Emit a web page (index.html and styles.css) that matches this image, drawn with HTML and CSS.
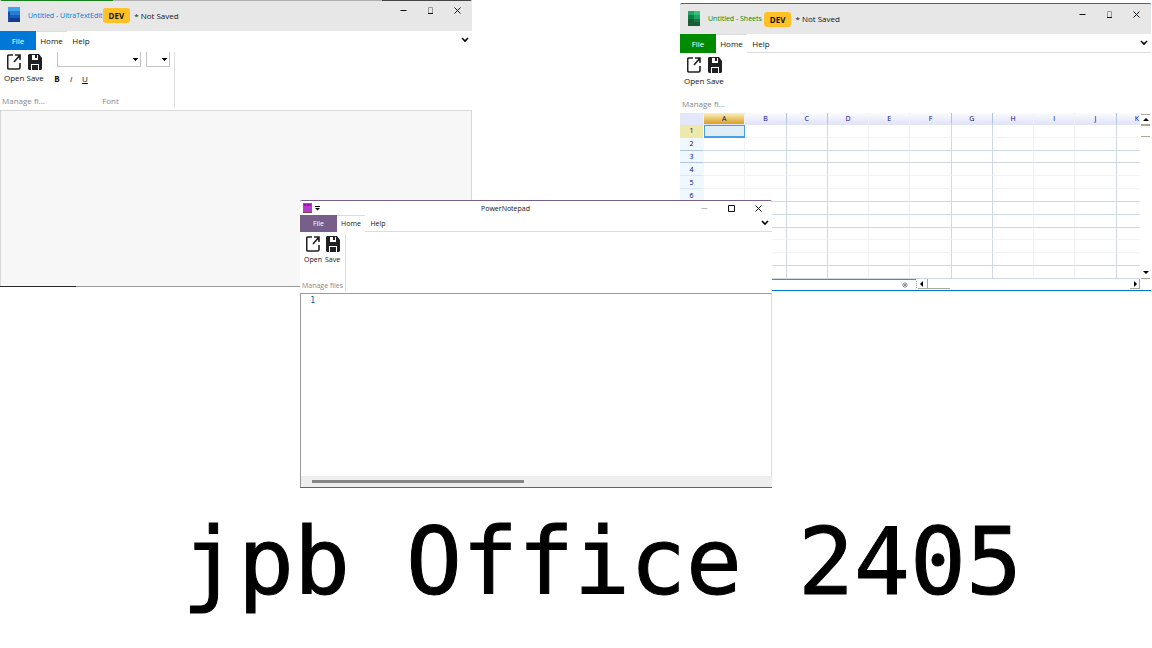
FILE: index.html
```
<!DOCTYPE html>
<html lang="en">
<head>
<meta charset="utf-8">
<title>jpb Office 2405</title>
<link rel="stylesheet" href="styles.css">
</head>
<body>
<svg class="defs" aria-hidden="true">
  <symbol id="open" viewBox="0 0 14 16"><path d="M6 1H2Q.7 1 .7 2.5v11Q.7 15 2 15h9.500Q13 15 13 13.500V9M8 1h5v5M13 1 7 8" fill="none" stroke="#202022" stroke-width="1.600"/></symbol>
  <symbol id="save" viewBox="0 0 14 16"><path fill="#202022" fill-rule="evenodd" d="M1 0h10l3 4v11l-1 1H1l-1-1V1zM4 1v5h6V1zM3 10v6h8v-6z"/><path d="M7 1h2v3H7zM4 11h6v5H4z" fill="#202022"/></symbol>
  <symbol id="min" viewBox="0 0 7 7"><path d="M.5 3.500h6" stroke="currentColor"/></symbol>
  <symbol id="max" viewBox="0 0 7 7"><path d="M1.500 .5h4v6h-4z" fill="none" stroke="#999"/><path d="M1 6.500h5" stroke="currentColor"/></symbol>
  <symbol id="square" viewBox="0 0 7 7"><path d="M.5 .5h6v6h-6z" fill="none" stroke="currentColor"/></symbol>
  <symbol id="close" viewBox="0 0 7 7"><path d="m.5.5 6 6m0-6-6 6" stroke="currentColor"/></symbol>
  <symbol id="chev" viewBox="0 0 8 6"><path d="m1 1 3 3 3-3" fill="none" stroke="#000" stroke-width="1.600"/></symbol>
</svg>
<main class="desktop">
  <section class="window text-edit" aria-label="UltraTextEdit">
    <header class="titlebar">
      <svg class="logo" viewBox="0 0 12 15"><path fill="#41a5ee" d="M0 0h12v4H0z"/><path fill="#2b7cd3" d="M0 4h12v4H0z"/><path fill="#185abd" d="M0 8h12v3H0z"/><path fill="#103f91" d="M0 11h12v4H0z"/><path fill="#1b4da8" d="M0 5h2v9H0z"/></svg>
      <span class="title">Untitled - UltraTextEdit</span><span class="badge">DEV</span><span class="state">* Not Saved</span>
      <div class="controls"><button aria-label="Minimize"><svg><use href="#min"/></svg></button><button aria-label="Maximize"><svg><use href="#max"/></svg></button><button aria-label="Close"><svg><use href="#close"/></svg></button></div>
    </header>
    <nav class="tabs"><button class="file">File</button><button class="tab active">Home</button><button class="tab">Help</button><button class="collapse" aria-label="Collapse ribbon"><svg><use href="#chev"/></svg></button></nav>
    <div class="ribbon">
      <div class="group files"><div class="tools"><button><svg><use href="#open"/></svg>Open</button><button><svg><use href="#save"/></svg>Save</button></div><span class="caption">Manage fi...</span></div>
      <div class="group font">
        <div class="pickers"><select class="family" aria-label="Font family"><option></option></select><select class="size" aria-label="Font size"><option></option></select></div>
        <div class="styles"><button aria-label="Bold"><b>B</b></button><button aria-label="Italic"><i>I</i></button><button aria-label="Underline"><u>U</u></button></div>
        <span class="caption">Font</span>
      </div>
    </div>
    <textarea class="page" aria-label="Document"></textarea>
    <div class="edge"></div>
  </section>

  <section class="window sheets" aria-label="Sheets">
    <header class="titlebar">
      <svg class="logo" viewBox="0 0 12 15"><path fill="#21a366" d="M0 0h12v4H0z"/><path fill="#33c481" d="M6 0h6v4H6z"/><path fill="#107c41" d="M0 4h12v4H0z"/><path fill="#21a366" d="M6 4h6v4H6z"/><path fill="#185c37" d="M0 8h12v7H0z"/><path fill="#107c41" d="M6 8h6v3H6z"/></svg>
      <span class="title">Untitled - Sheets</span><span class="badge">DEV</span><span class="state">* Not Saved</span>
      <div class="controls"><button aria-label="Minimize"><svg><use href="#min"/></svg></button><button aria-label="Maximize"><svg><use href="#max"/></svg></button><button aria-label="Close"><svg><use href="#close"/></svg></button></div>
    </header>
    <nav class="tabs"><button class="file">File</button><button class="tab active">Home</button><button class="tab">Help</button><button class="collapse" aria-label="Collapse ribbon"><svg><use href="#chev"/></svg></button></nav>
    <div class="ribbon">
      <div class="group files"><div class="tools"><button><svg><use href="#open"/></svg>Open</button><button><svg><use href="#save"/></svg>Save</button></div><span class="caption">Manage fi...</span></div>
    </div>
    <div class="workbook">
      <div class="grid">
        <table>
          <thead><tr><th class="corner"></th><th class="picked">A</th><th>B</th><th>C</th><th>D</th><th>E</th><th>F</th><th>G</th><th>H</th><th>I</th><th>J</th><th>K</th></tr></thead>
          <tbody>
            <tr><th class="picked">1</th><td class="cursor"></td><td></td><td></td><td></td><td></td><td></td><td></td><td></td><td></td><td></td><td></td></tr>
            <tr class="strong"><th>2</th><td></td><td></td><td></td><td></td><td></td><td></td><td></td><td></td><td></td><td></td><td></td></tr>
            <tr class="strong"><th>3</th><td></td><td></td><td></td><td></td><td></td><td></td><td></td><td></td><td></td><td></td><td></td></tr>
            <tr><th>4</th><td></td><td></td><td></td><td></td><td></td><td></td><td></td><td></td><td></td><td></td><td></td></tr>
            <tr><th>5</th><td></td><td></td><td></td><td></td><td></td><td></td><td></td><td></td><td></td><td></td><td></td></tr>
            <tr class="strong"><th>6</th><td></td><td></td><td></td><td></td><td></td><td></td><td></td><td></td><td></td><td></td><td></td></tr>
            <tr class="strong"><th></th><td></td><td></td><td></td><td></td><td></td><td></td><td></td><td></td><td></td><td></td><td></td></tr>
            <tr class="strong"><th></th><td></td><td></td><td></td><td></td><td></td><td></td><td></td><td></td><td></td><td></td><td></td></tr>
            <tr><th></th><td></td><td></td><td></td><td></td><td></td><td></td><td></td><td></td><td></td><td></td><td></td></tr>
            <tr><th></th><td></td><td></td><td></td><td></td><td></td><td></td><td></td><td></td><td></td><td></td><td></td></tr>
            <tr class="strong"><th></th><td></td><td></td><td></td><td></td><td></td><td></td><td></td><td></td><td></td><td></td><td></td></tr>
            <tr class="strong"><th></th><td></td><td></td><td></td><td></td><td></td><td></td><td></td><td></td><td></td><td></td><td></td></tr>
          </tbody>
        </table>
      </div>
      <div class="vscroll"><button aria-label="Scroll up"><svg viewBox="0 0 6 4"><path d="M3 0 6 3H0z"/></svg></button><span class="thumb"></span><button class="end" aria-label="Scroll down"><svg viewBox="0 0 6 4"><path d="M0 0h6L3 3z"/></svg></button></div>
    </div>
    <footer class="sheetbar">
      <div class="sheettabs"><button aria-label="New sheet"><svg viewBox="0 0 6 6"><path d="M3 0v6M0 3h6M1 1l4 4M5 1 1 5" stroke="#8a929c" stroke-width="1"/></svg></button></div>
      <span class="grip"></span>
      <div class="hscroll"><button aria-label="Scroll left"><svg viewBox="0 0 4 6"><path d="M3 0v6L0 3z"/></svg></button><span class="thumb"></span><button class="end" aria-label="Scroll right"><svg viewBox="0 0 4 6"><path d="M1 0v6l3-3z"/></svg></button></div>
    </footer>
  </section>

  <section class="window notepad" aria-label="PowerNotepad">
    <header class="titlebar">
      <div class="quick"><svg class="logo" viewBox="0 0 9 10"><path fill="#c832d2" d="M0 0h9v9H0z"/><path fill="#b040cc" d="M0 5h9v4H0z"/><path d="M1 1l1 2 1-2M4 1l1 2 1-2M7 1v2" fill="none" stroke="#7a1696"/><path fill="#8b4040" d="M0 9h9v1H0z"/></svg><svg class="more" viewBox="0 0 5 5"><path d="M0 0h5v1H0zM0 2h5L2.500 4.500z"/></svg></div>
      <span class="title">PowerNotepad</span>
      <div class="controls"><button class="dim" aria-label="Minimize"><svg><use href="#min"/></svg></button><button aria-label="Maximize"><svg><use href="#square"/></svg></button><button aria-label="Close"><svg><use href="#close"/></svg></button></div>
    </header>
    <nav class="tabs"><button class="file">File</button><button class="tab active">Home</button><button class="tab">Help</button><button class="collapse" aria-label="Collapse ribbon"><svg><use href="#chev"/></svg></button></nav>
    <div class="ribbon">
      <div class="group files"><div class="tools"><button><svg><use href="#open"/></svg>Open</button><button><svg><use href="#save"/></svg>Save</button></div><span class="caption">Manage files</span></div>
    </div>
    <div class="editor"><span class="line">1</span><textarea aria-label="Code"></textarea></div>
    <div class="track"><span class="thumb"></span></div>
  </section>
</main>
<h1 class="product">jpb Office 2405</h1>
</body>
</html>
```
FILE: styles.css
```
* { box-sizing: border-box; }
body {
  margin: 0;
  min-height: 100vh;
  display: flex;
  flex-direction: column;
  background: #fff;
  color: #111;
  font-family: "Open Sans", "Noto Sans", sans-serif;
  font-size: 8px;
  line-height: 12px;
}
button, select, textarea { font: inherit; color: inherit; border: 0; padding: 0; margin: 0; background: none; border-radius: 0; }
svg { display: block; flex: none; }
.defs { position: absolute; width: 0; height: 0; }
.desktop { position: relative; flex: 1; min-height: 488px; }
.product {
  margin: 0;
  padding: 0 0 32px 52px;
  text-align: center;
  white-space: nowrap;
  font: 400 93px/108px "DejaVu Sans Mono", monospace;
  color: #000;
  -webkit-text-stroke: 1px #000;
}

/* Windows */
.window { position: absolute; display: flex; flex-direction: column; width: 41%; background: #fff; }
.text-edit { left: 0; top: 0; height: 287px; --accent: #0078d7; }
.sheets { left: 680px; right: 1px; top: 3px; width: auto; height: 288px; border-bottom: 1px solid #0078d7; --accent: #008a00; }
.notepad { left: 300px; top: 200px; height: 288px; border-bottom: 1px solid #6b5c78; --accent: #785f8a; }

.titlebar { display: flex; align-items: center; height: 31px; padding-left: 8px; background: #e7e7e7; border-top: 1px solid #0078d7; border-radius: 2px 2px 0 0; }
.text-edit .titlebar { border-top: 0; background: linear-gradient(90deg, #15811a 24%, #b0b0b0 24%, #b0b0b0 81%, #444 81%) top / 100% 1px no-repeat #e7e7e7; }
.titlebar .logo { width: 12px; height: 15px; margin-right: 8px; margin-bottom: 2px; }
.titlebar .title { color: var(--accent); font-size: 7px; white-space: nowrap; }
.badge { margin: 0 4px 0 2px; padding: 0 6px; line-height: 15px; border-radius: 3px; background: #ffc125; font-weight: 700; }
.text-edit .badge { margin: 0 4px 0 0; }
.state { white-space: nowrap; }
.controls { display: flex; align-self: flex-start; margin-left: auto; padding-right: 1px; }
.controls button { display: grid; place-items: center; width: 27px; height: 21px; }
.controls svg { width: 7px; height: 7px; }
.controls .dim { color: #bbb; }

.notepad .titlebar { display: grid; grid-template-columns: 178px 1fr auto; height: 15px; padding-left: 3px; background: #fff; border-top-color: #785f8a; }
.notepad .title { color: #111; }
.quick { display: flex; align-items: center; gap: 3px; }
.notepad .logo { width: 9px; height: 10px; margin: 0 0 2px; }
.more { width: 5px; height: 5px; }
.notepad .controls { padding-right: 0; }
.notepad .controls button { height: 15px; }

.tabs { display: flex; height: 19px; border-bottom: 1px solid #dcdcdc; }
.text-edit .tabs { border-bottom-color: #fff; }
.file { width: 36px; margin-bottom: -1px; background: var(--accent); color: #fff; }
.notepad .file { width: 37px; }
.tab { width: 28px; padding-top: 1px; }
.tab.active { width: 31px; padding-top: 0; margin-bottom: -1px; border-top: 1px solid #dcdcdc; background: #fff; }
.notepad .tabs { height: 17px; font-size: 7px; }
.notepad .tab { width: 26px; }
.notepad .tab.active { width: 28px; }
.collapse { margin-left: auto; width: 15px; display: grid; place-items: center; }
.collapse svg { width: 8px; height: 6px; }

.ribbon { display: flex; height: 60px; padding: 2px 0 3px; }
.notepad .ribbon { height: 61px; padding-bottom: 2px; }
.group { display: flex; flex-direction: column; }
.files { width: 49px; }
.notepad .files { width: 46px; border-right: 1px solid #dcdcdc; font-size: 7px; }
.tools { display: flex; gap: 2px; padding: 2px 0 0 4px; }
.notepad .tools { gap: 3px; }
.tools button { display: flex; flex-direction: column; align-items: center; gap: 2px; }
.tools svg { width: 14px; height: 16px; }
.caption { margin-top: auto; padding-left: 2px; color: #888; white-space: nowrap; }
.notepad .caption { line-height: 10px; }
.font { width: 126px; padding-left: 8px; border-right: 1px solid #dcdcdc; }
.pickers { display: flex; gap: 5px; }
.pickers select { height: 15px; appearance: none; border: 1px solid #c4c4c4; border-top: 0; background: conic-gradient(from -45deg at 50% 100%, #000 90deg, transparent 0) right 2px center / 5px 3px no-repeat; }
.pickers select { background-image: conic-gradient(from -45deg at 50% 100%, #000 90deg, transparent 0); }
.pickers .family { width: 84px; }
.pickers .size { width: 24px; }
.styles { display: flex; margin-top: 6px; margin-left: -7px; }
.styles button { width: 14px; }
.font .caption { padding-right: 12px; text-align: center; }

.page { flex: 1; width: 100%; resize: none; background: #f7f7f7; border: 1px solid #d8d8d8; border-bottom: 0; }
.edge { height: 1px; background: linear-gradient(90deg, #2a2a2a 16%, #999 16%); }

/* Spreadsheet */
.workbook { display: flex; flex: 1; min-height: 0; }
.grid { flex: 1; min-width: 0; overflow: hidden; }
table { width: calc(100% + 18px); height: 166px; table-layout: fixed; border-spacing: 0; font-size: 7px; line-height: 10px; color: #000080; }
tbody tr { height: 12px; }
th, td { padding: 0; font-weight: 400; border-right: 1px solid #f0f2f6; border-bottom: 1px solid #f0f2f6; }
thead th { height: 12px; background: linear-gradient(#fbfbff, #e2e4f8); border-bottom-color: #e2e4f8; }
th:nth-child(3), th:nth-child(4), th:nth-child(7), th:nth-child(8), th:nth-child(11) { border-right-color: #b0c4de; }
td:nth-child(3), td:nth-child(4), td:nth-child(7), td:nth-child(8), td:nth-child(11) { border-right-color: #d0d7e5; }
.strong td { border-bottom-color: #d0d7e5; }
thead .corner { width: 24px; background: #e4e6fa; }
thead .picked { background: linear-gradient(#fbf0c0, #d8a020); }
tbody th { padding-top: 1px; background: #f0f8ff; border-right-color: #f0f8ff; border-bottom-color: #dbe8f4; }
tbody .strong th { border-bottom-color: #b0c4de; }
tbody .picked { background: #eee8aa; }
.cursor { background: #e0eefa; border: 1px solid #4a9fe3; border-bottom-width: 2px; }
.vscroll { display: flex; flex-direction: column; width: 11px; padding: 1px 1px 0; }
.vscroll button { display: grid; place-items: center; height: 12px; border-top: 1px solid #aca899; border-bottom: 2px solid #aca899; }
.vscroll .thumb { height: 11px; border-bottom: 1px solid #aca899; }
.vscroll svg { width: 6px; height: 4px; }
.vscroll .end { margin-top: auto; border-top: 0; border-bottom-width: 1px; }
.sheetbar { display: flex; height: 11px; }
.sheettabs { flex: 0 0 50%; display: flex; justify-content: flex-end; align-items: center; padding-right: 8px; border-top: 1px solid #00a8f0; }
.sheettabs svg { width: 6px; height: 6px; }
.grip { width: 2px; margin: 2px 0; border-left: 1px dotted #999; }
.hscroll { flex: 1; display: flex; padding: 0 11px 1px 0; }
.hscroll button { display: grid; place-items: center; width: 10px; border-right: 1px solid #aca899; border-bottom: 1px solid #aca899; }
.hscroll svg { width: 4px; height: 6px; }
.hscroll .thumb { width: 22px; border-bottom: 1px solid #aca899; }
.hscroll .end { margin-left: auto; }

/* Code editor */
.editor { flex: 1; display: flex; border: 1px solid #999; border-bottom: 0; border-right-color: #ddd; }
.line { width: 14px; padding-top: 1px; text-align: right; color: #005a9e; font-family: "DejaVu Sans Mono", monospace; }
.editor textarea { flex: 1; resize: none; }
.track { height: 11px; padding: 4px 0 0 11px; background: #eee; border-left: 1px solid #999; }
.track .thumb { display: block; width: 46%; height: 3px; background: #858585; }
```
